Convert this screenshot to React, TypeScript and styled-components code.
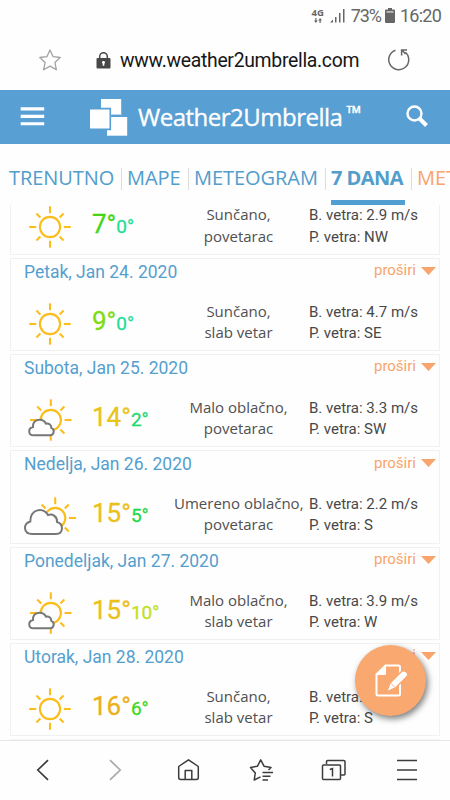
import React from "react";
import styled, { createGlobalStyle } from "styled-components";

const GlobalStyle = createGlobalStyle`
  * { box-sizing: border-box; }
  html, body { margin: 0; padding: 0; background: #fefefe; }
  body { font-family: Roboto, "Liberation Sans", sans-serif; overflow: hidden; }
  svg { display: block; flex: none; }
`;

const Screen = styled.div`
  position: relative;
  width: 450px;
  height: 800px;
  display: flex;
  flex-direction: column;
  overflow: hidden;
  background: #fefefe;
`;

const StatusBar = styled.div`
  height: 30px;
  padding: 1px 9px 0 0;
  display: flex;
  align-items: center;
  justify-content: flex-end;
  font-size: 18px;
  color: #666;
`;

const Network = styled.div`
  display: flex;
  flex-direction: column;
  align-items: center;
  margin-right: 6px;
  font: 700 9.5px/10px "Open Sans", sans-serif;
`;

const Percent = styled.span`
  margin: 0 4px 0 6px;
  letter-spacing: -1.1px;
`;

const Clock = styled.span`
  margin-left: 5px;
  letter-spacing: -0.75px;
`;

const AddressBar = styled.div`
  height: 60px;
  padding: 0 39px;
  display: flex;
  align-items: center;
`;

const LockSlot = styled.span`
  margin-left: 35px;
`;

const Address = styled.span`
  margin-left: 9px;
  width: 270px;
  font-size: 19.4px;
  letter-spacing: -0.3px;
  color: #161616;
`;

const SiteHeader = styled.header`
  height: 54px;
  padding: 0 20px 0 20px;
  display: flex;
  align-items: center;
  background: #589fd4;
  color: #fff;
`;

const Brand = styled.h1`
  margin: 0 0 0 10px;
  width: 271px;
  display: flex;
  font: 500 24px/56px "Open Sans", sans-serif;
  letter-spacing: -0.5px;
  -webkit-text-stroke: 0.35px #fff;
`;

const Trademark = styled.sup`
  margin-left: 4px;
  font-size: 20px;
  line-height: 48px;
  letter-spacing: 0;
  vertical-align: baseline;
`;

const Tabs = styled.nav`
  height: 61px;
  flex: none;
  padding: 22px 0 0 9px;
  display: flex;
  white-space: nowrap;
  overflow: hidden;
`;

const Tab = styled.a<{ $active?: boolean; $accent?: boolean; $w: number }>`
  width: ${(p) => p.$w}px;
  flex: none;
  height: 39px;
  font: ${(p) => (p.$active ? 700 : 400)} 20px/23px "Open Sans", sans-serif;
  letter-spacing: ${(p) => (p.$active ? "-0.55px" : "-0.05px")};
  color: ${(p) => (p.$accent ? "#f8a46c" : "#519dcb")};
  border-bottom: 5px solid ${(p) => (p.$active ? "#519fd2" : "transparent")};
`;

const Divider = styled.span`
  flex: none;
  width: 1px;
  height: 22px;
  margin: 2px 5px 0 6px;
  background: #ddd;
`;

const Forecast = styled.main`
  height: 535px;
  flex: none;
  padding: 0 10px;
  overflow: hidden;
`;

const CardStack = styled.div`
  margin-top: -43.8px;
  display: flex;
  flex-direction: column;
  gap: 3px;
`;

const Card = styled.section`
  height: 93.33px;
  flex: none;
  border: 1.3px solid #f1f1f1;
  background: #fefefe;
`;

const CardHead = styled.div`
  height: 26px;
  padding: 0 3px 0 13px;
  display: flex;
  justify-content: space-between;
`;

const DateLabel = styled.h2`
  margin: 0;
  font-size: 17.5px;
  line-height: 26px;
  font-weight: 400;
  color: #559fce;
`;

const Expand = styled.span`
  display: flex;
  align-items: center;
  gap: 5px;
  font-size: 15px;
  line-height: 23px;
  height: 24px;
  color: #f8a46c;
`;

const CardBody = styled.div`
  display: grid;
  grid-template-columns: 70px 82px 129px 1fr;
  padding-left: 11px;
`;

const IconCell = styled.div`
  padding-top: 16px;
`;

const Temps = styled.div`
  padding-top: 18px;
  display: flex;
  align-items: baseline;
  height: 56px;
  line-height: 36px;
`;

const Temp = styled.span<{ $color: string; $small?: boolean }>`
  font-size: ${(p) => (p.$small ? 19 : 26)}px;
  color: ${(p) => p.$color};
  -webkit-text-stroke: 0.3px ${(p) => p.$color};
`;

const Condition = styled.div`
  padding-top: 16px;
  text-align: center;
  white-space: nowrap;
  font: 400 15px/21.3px "Open Sans", sans-serif;
  color: #505050;
`;

const Wind = styled.div`
  padding: 17px 0 0 6px;
  font-size: 15px;
  line-height: 21.3px;
  white-space: nowrap;
  color: #484848;
`;

const NextSection = styled.div`
  height: 6px;
  background: #f5f5f5;
`;

const ComposeButton = styled.button`
  position: absolute;
  left: 355px;
  top: 645px;
  width: 71px;
  height: 71px;
  padding: 0;
  border: 0;
  border-radius: 50%;
  display: flex;
  align-items: center;
  justify-content: center;
  background: #f9a870;
  box-shadow: 2px 3px 6px rgba(0, 0, 0, 0.5);
`;

const BottomBar = styled.footer`
  height: 60px;
  flex: none;
  padding: 0 27px 2px;
  display: flex;
  align-items: center;
  justify-content: space-between;
  border-top: 1px solid #e6e6e6;
  background: #fefefe;
`;

type Sky = "sun" | "partly" | "cloudy";

const rays = [0, 45, 90, 135, 180, 225, 270, 315];

function Sun({ x, y, hide = [] }: { x: number; y: number; hide?: number[] }) {
  return (
    <g transform={`translate(${x} ${y})`} stroke="#fbbd1b" strokeWidth="2.1" fill="none">
      <circle r="10.1" />
      {rays.filter((a) => !hide.includes(a)).map((a) => (
        <path key={a} d={a % 90 ? "M13.6 0H19.2" : "M13.8 0H20.7"} transform={`rotate(${a})`} />
      ))}
    </g>
  );
}

function SkyIcon({ sky }: { sky: Sky }) {
  return (
    <svg width="56" height="46" viewBox="0 0 56 46">
      {sky === "sun" && <Sun x={28} y={23} />}
      {sky === "partly" && (
        <>
          <Sun x={28.8} y={23} hide={[135]} />
          <path d="M11.5 38.3H28A3.9 3.9 0 0 0 29.3 30.8C29.5 28 27 26 24 26.7C22.5 23.5 20 22.6 17.3 22.7C13 23 10.5 26 11 30C5.5 31.5 6.3 38.3 11.5 38.3Z" fill="#fefefe" stroke="#777" strokeWidth="2" />
        </>
      )}
      {sky === "cloudy" && (
        <>
          <Sun x={33.2} y={25} hide={[90, 135, 180]} />
          <path d="M10 41H34C41.5 41 42 31 35 29C35.5 23.5 30.5 20.5 26 22C21 13.5 8.5 16 8.3 28.5C0.5 31 1.5 41 10 41Z" fill="#fefefe" stroke="#777" strokeWidth="2" />
        </>
      )}
    </svg>
  );
}

interface Day {
  date: string;
  sky: Sky;
  high: [string, string];
  low: [string, string];
  condition: [string, string];
  speed: string;
  direction: string;
}

const days: Day[] = [
  { date: "Četvrtak, Jan 23. 2020", sky: "sun", high: ["7°", "#43d615"], low: ["0°", "#1fdc9a"], condition: ["Sunčano,", "povetarac"], speed: "2.9", direction: "NW" },
  { date: "Petak, Jan 24. 2020", sky: "sun", high: ["9°", "#7fdc14"], low: ["0°", "#1fdc9a"], condition: ["Sunčano,", "slab vetar"], speed: "4.7", direction: "SE" },
  { date: "Subota, Jan 25. 2020", sky: "partly", high: ["14°", "#e9c41a"], low: ["2°", "#1ed870"], condition: ["Malo oblačno,", "povetarac"], speed: "3.3", direction: "SW" },
  { date: "Nedelja, Jan 26. 2020", sky: "cloudy", high: ["15°", "#ecc01a"], low: ["5°", "#1dd846"], condition: ["Umereno oblačno,", "povetarac"], speed: "2.2", direction: "S" },
  { date: "Ponedeljak, Jan 27. 2020", sky: "partly", high: ["15°", "#ecc01a"], low: ["10°", "#bfe01f"], condition: ["Malo oblačno,", "slab vetar"], speed: "3.9", direction: "W" },
  { date: "Utorak, Jan 28. 2020", sky: "sun", high: ["16°", "#ecb01a"], low: ["6°", "#3dd81c"], condition: ["Sunčano,", "slab vetar"], speed: "3.2", direction: "S" },
];

function DayCard({ day }: { day: Day }) {
  return (
    <Card>
      <CardHead>
        <DateLabel>{day.date}</DateLabel>
        <Expand>
          proširi
          <svg width="15" height="8" viewBox="0 0 15 8"><path d="M0 0H15L7.5 8Z" fill="#f8a46c" /></svg>
        </Expand>
      </CardHead>
      <CardBody>
        <IconCell><SkyIcon sky={day.sky} /></IconCell>
        <Temps>
          <Temp $color={day.high[1]}>{day.high[0]}</Temp>
          <Temp $color={day.low[1]} $small>{day.low[0]}</Temp>
        </Temps>
        <Condition>{day.condition[0]}<br />{day.condition[1]}</Condition>
        <Wind>B. vetra: {day.speed} m/s<br />P. vetra: {day.direction}</Wind>
      </CardBody>
    </Card>
  );
}

export default function App() {
  return (
    <Screen>
      <GlobalStyle />
      <StatusBar>
        <Network>
          4G
          <svg width="8" height="5" viewBox="0 0 8 5" fill="#666"><path d="M1.3 0H2.5V2.5H3.8L1.9 5L0 2.5H1.3ZM5.5 5H6.7V2.5H8L6.1 0L4.2 2.5H5.5Z" /></svg>
        </Network>
        <svg width="15" height="15" viewBox="0 0 15 15" fill="#666">
          <path d="M0 14.5L3 11.5V14.5ZM5 9H6.5V14.5H5ZM9 5H10.5V14.5H9ZM13 1H14.5V14.5H13Z" />
        </svg>
        <Percent>73%</Percent>
        <svg width="10" height="15" viewBox="0 0 10 15">
          <path d="M3 0H7V1.5H9Q10 1.5 10 2.5V14Q10 15 9 15H1Q0 15 0 14V2.5Q0 1.5 1 1.5H3Z" fill="#666" />
          <path d="M1.5 3H8.5V4.8H1.5Z" fill="#bbb" />
        </svg>
        <Clock>16:20</Clock>
      </StatusBar>

      <AddressBar>
        <svg width="22" height="22" viewBox="0 0 22 22" fill="none" stroke="#a2a2a2" strokeWidth="1.3" strokeLinejoin="round">
          <path d="M11 1L14.1 7.7L21.2 8.5L15.9 13.4L17.4 20.8L11 17.1L4.6 20.8L6.1 13.4L.8 8.5L7.9 7.7Z" />
        </svg>
        <LockSlot>
          <svg width="15" height="17" viewBox="0 0 15 17">
            <path d="M3.7 7V4.5A3.8 3.8 0 0 1 11.3 4.5V7" fill="none" stroke="#484848" strokeWidth="1.5" />
            <rect x=".5" y="6" width="14" height="10.5" rx="1" fill="#484848" />
            <path d="M7.5 9A1.5 1.5 0 0 1 8.3 11.8V13.7H6.7V11.8A1.5 1.5 0 0 1 7.5 9Z" fill="#fff" />
          </svg>
        </LockSlot>
        <Address>www.weather2umbrella.com</Address>
        <svg width="24" height="24" viewBox="0 0 24 24" fill="none" stroke="#666" strokeWidth="1.5">
          <path d="M8.5 2.2A10 10 0 1 0 18.4 4.2M20 1.9H14.6V7.4M14.8 2.1L18.6 6" />
        </svg>
      </AddressBar>

      <SiteHeader>
        <svg width="108" height="40" viewBox="20 0 108 40" fill="#fff">
          <path d="M20.7 10.3H44.2V13.4H20.7ZM20.7 17.8H44.2V20.9H20.7ZM20.7 25.2H44.2V28.3H20.7Z" />
          <path d="M101 2H121.2V19H101Z" />
          <path d="M107 20H127.2V38.7H107Z" />
          <path d="M89.2 11.6H110.3V32.4H89.2Z" stroke="#589fd4" strokeWidth="1.6" />
          <path d="M111.2 18.4H121.2" stroke="#589fd4" strokeWidth="1.6" />
        </svg>
        <Brand>Weather2Umbrella<Trademark>™</Trademark></Brand>
        <svg width="24" height="24" viewBox="0 0 24 24" fill="none" stroke="#fff">
          <circle cx="8.5" cy="8.5" r="7" strokeWidth="2.4" />
          <path d="M13.5 13.5L20.5 20.5" strokeWidth="4" />
        </svg>
      </SiteHeader>

      <Tabs>
        <Tab $w={106}>TRENUTNO</Tab><Divider />
        <Tab $w={55}>MAPE</Tab><Divider />
        <Tab $w={125}>METEOGRAM</Tab><Divider />
        <Tab $w={74} $active>7 DANA</Tab><Divider />
        <Tab $w={60} $accent>METEO</Tab>
      </Tabs>

      <Forecast>
        <CardStack>
          {days.map((day) => <DayCard key={day.date} day={day} />)}
          <NextSection />
        </CardStack>
      </Forecast>

      <ComposeButton aria-label="Uredi">
        <svg width="34" height="34" viewBox="0 0 34 34" fill="none">
          <path d="M11.5 1.5H24.5Q26 1.5 26 3V30Q26 31.5 24.5 31.5H4Q2.5 31.5 2.5 30V10.5Z" stroke="#fff" strokeWidth="2" />
          <path d="M12 1.5V9.5Q12 11 10.5 11H2.5Z" fill="#fff" />
          <path d="M12.5 28L16 19L27.5 7.5Q30 5.5 32.5 8Q35 10.5 33 12.5L21.5 24Z" fill="#fff" stroke="#f9a870" strokeWidth="1.5" />
          <path d="M17 19.5L21 23.5" stroke="#f9a870" strokeWidth="0.9" />
        </svg>
      </ComposeButton>

      <BottomBar>
        <svg width="32" height="28" viewBox="0 0 32 28" fill="none" stroke="#3c3c3c" strokeWidth="1.7"><path d="M21 4.2L10.8 14L21 23.8" /></svg>
        <svg width="32" height="28" viewBox="0 0 32 28" fill="none" stroke="#aaa" strokeWidth="1.7"><path d="M10 4.2L20.2 14L10 23.8" /></svg>
        <svg width="32" height="28" viewBox="0 0 32 28" fill="none" stroke="#3c3c3c" strokeWidth="1.5" strokeLinejoin="round"><path d="M5.7 10.5L15.5 3.8L25.3 10.5V21.5Q25.3 23.5 23.3 23.5H7.7Q5.7 23.5 5.7 21.5ZM12.2 23.5V14.5H18.8V23.5" /></svg>
        <svg width="32" height="28" viewBox="0 0 32 28" fill="none" stroke="#3c3c3c" strokeWidth="1.5" strokeLinejoin="round"><path d="M15.5 20.8L9.2 24L10.3 17L5.5 11.5L12.5 10.2L15.7 3.8L19 10.2L26 11.5L23.5 14M17.5 16.6H28M17.5 20.2H25.5M17.5 24H23" /></svg>
        <svg width="32" height="28" viewBox="0 0 32 28" fill="none" stroke="#3c3c3c" strokeWidth="1.5"><path d="M8.5 8V5.7Q8.5 4.5 9.7 4.5H25.8Q27 4.5 27 5.7V18Q27 19 26 19H22.5" /><rect x="4.5" y="9" width="18" height="14.5" rx="1" /><path d="M11.8 13.5L14.5 12.5V20.5" /></svg>
        <svg width="32" height="28" viewBox="0 0 32 28" fill="none" stroke="#3c3c3c" strokeWidth="1.5"><path d="M6 4.5H26M6 14H26M6 23.5H26" /></svg>
      </BottomBar>
    </Screen>
  );
}
